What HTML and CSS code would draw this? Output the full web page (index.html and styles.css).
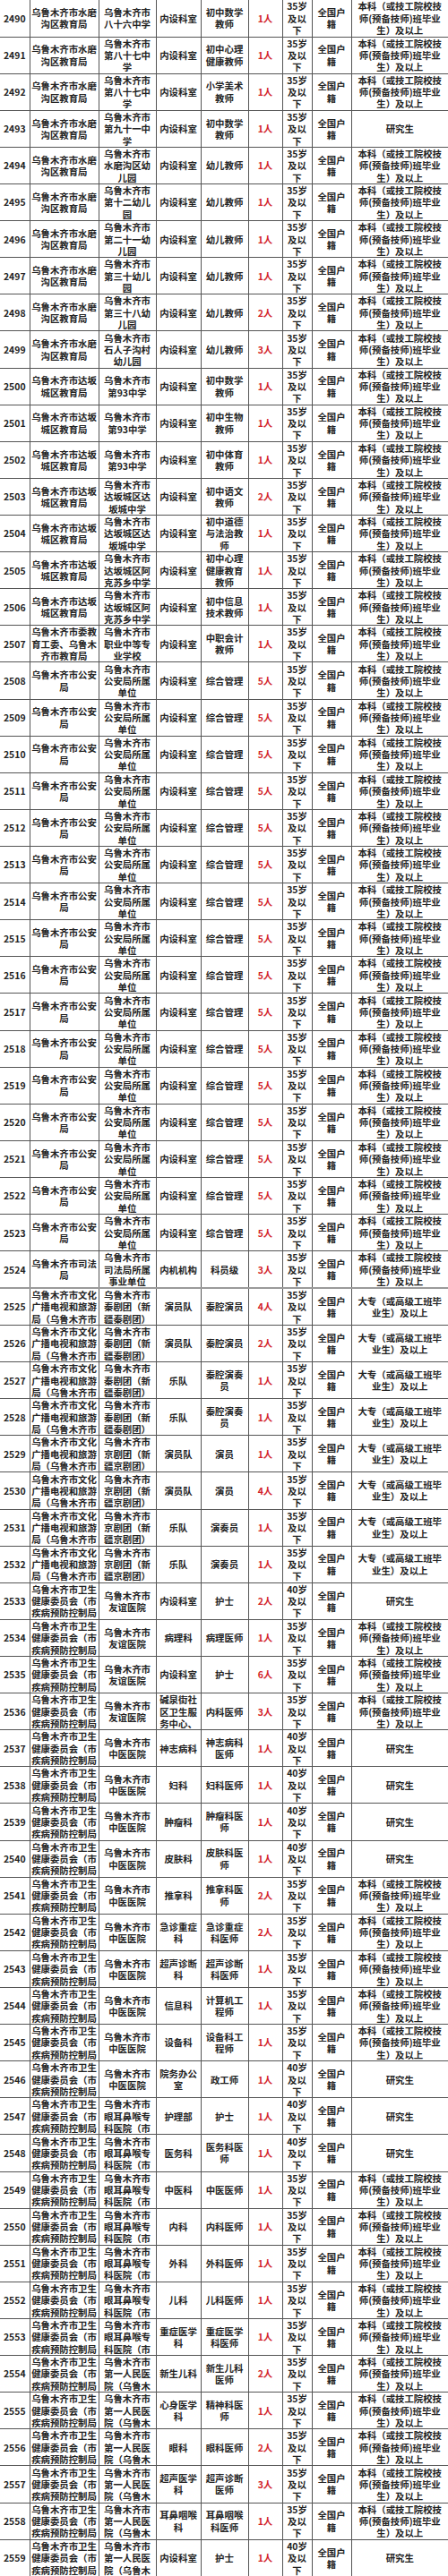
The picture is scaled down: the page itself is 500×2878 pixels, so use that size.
FILE: index.html
```html
<!DOCTYPE html>
<html lang="zh-CN">
<head>
<meta charset="utf-8">
<title>招聘岗位表</title>
<link rel="stylesheet" href="styles.css">
</head>
<body>
<table class="tbl">
<colgroup><col class="c1"><col class="c2"><col class="c3"><col class="c4"><col class="c5"><col class="c6"><col class="c7"><col class="c8"><col class="c9"></colgroup>
<tbody>
<tr><td>2490</td><td>乌鲁木齐市水磨<br>沟区教育局</td><td>乌鲁木齐市<br>八十六中学</td><td>内设科室</td><td>初中数学<br>教师</td><td class="n">1人</td><td>35岁<br>及以<br>下</td><td>全国户<br>籍</td><td>本科（或技工院校技<br>师(预备技师)班毕业<br>生）及以上</td></tr>
<tr><td>2491</td><td>乌鲁木齐市水磨<br>沟区教育局</td><td>乌鲁木齐市<br>第八十七中<br>学</td><td>内设科室</td><td>初中心理<br>健康教师</td><td class="n">1人</td><td>35岁<br>及以<br>下</td><td>全国户<br>籍</td><td>本科（或技工院校技<br>师(预备技师)班毕业<br>生）及以上</td></tr>
<tr><td>2492</td><td>乌鲁木齐市水磨<br>沟区教育局</td><td>乌鲁木齐市<br>第八十七中<br>学</td><td>内设科室</td><td>小学美术<br>教师</td><td class="n">1人</td><td>35岁<br>及以<br>下</td><td>全国户<br>籍</td><td>本科（或技工院校技<br>师(预备技师)班毕业<br>生）及以上</td></tr>
<tr><td>2493</td><td>乌鲁木齐市水磨<br>沟区教育局</td><td>乌鲁木齐市<br>第九十一中<br>学</td><td>内设科室</td><td>初中数学<br>教师</td><td class="n">1人</td><td>35岁<br>及以<br>下</td><td>全国户<br>籍</td><td>研究生</td></tr>
<tr><td>2494</td><td>乌鲁木齐市水磨<br>沟区教育局</td><td>乌鲁木齐市<br>水磨沟区幼<br>儿园</td><td>内设科室</td><td>幼儿教师</td><td class="n">1人</td><td>35岁<br>及以<br>下</td><td>全国户<br>籍</td><td>本科（或技工院校技<br>师(预备技师)班毕业<br>生）及以上</td></tr>
<tr><td>2495</td><td>乌鲁木齐市水磨<br>沟区教育局</td><td>乌鲁木齐市<br>第十二幼儿<br>园</td><td>内设科室</td><td>幼儿教师</td><td class="n">1人</td><td>35岁<br>及以<br>下</td><td>全国户<br>籍</td><td>本科（或技工院校技<br>师(预备技师)班毕业<br>生）及以上</td></tr>
<tr><td>2496</td><td>乌鲁木齐市水磨<br>沟区教育局</td><td>乌鲁木齐市<br>第二十一幼<br>儿园</td><td>内设科室</td><td>幼儿教师</td><td class="n">1人</td><td>35岁<br>及以<br>下</td><td>全国户<br>籍</td><td>本科（或技工院校技<br>师(预备技师)班毕业<br>生）及以上</td></tr>
<tr><td>2497</td><td>乌鲁木齐市水磨<br>沟区教育局</td><td>乌鲁木齐市<br>第三十幼儿<br>园</td><td>内设科室</td><td>幼儿教师</td><td class="n">1人</td><td>35岁<br>及以<br>下</td><td>全国户<br>籍</td><td>本科（或技工院校技<br>师(预备技师)班毕业<br>生）及以上</td></tr>
<tr><td>2498</td><td>乌鲁木齐市水磨<br>沟区教育局</td><td>乌鲁木齐市<br>第三十八幼<br>儿园</td><td>内设科室</td><td>幼儿教师</td><td class="n">2人</td><td>35岁<br>及以<br>下</td><td>全国户<br>籍</td><td>本科（或技工院校技<br>师(预备技师)班毕业<br>生）及以上</td></tr>
<tr><td>2499</td><td>乌鲁木齐市水磨<br>沟区教育局</td><td>乌鲁木齐市<br>石人子沟村<br>幼儿园</td><td>内设科室</td><td>幼儿教师</td><td class="n">3人</td><td>35岁<br>及以<br>下</td><td>全国户<br>籍</td><td>本科（或技工院校技<br>师(预备技师)班毕业<br>生）及以上</td></tr>
<tr><td>2500</td><td>乌鲁木齐市达坂<br>城区教育局</td><td>乌鲁木齐市<br>第93中学</td><td>内设科室</td><td>初中数学<br>教师</td><td class="n">1人</td><td>35岁<br>及以<br>下</td><td>全国户<br>籍</td><td>本科（或技工院校技<br>师(预备技师)班毕业<br>生）及以上</td></tr>
<tr><td>2501</td><td>乌鲁木齐市达坂<br>城区教育局</td><td>乌鲁木齐市<br>第93中学</td><td>内设科室</td><td>初中生物<br>教师</td><td class="n">1人</td><td>35岁<br>及以<br>下</td><td>全国户<br>籍</td><td>本科（或技工院校技<br>师(预备技师)班毕业<br>生）及以上</td></tr>
<tr><td>2502</td><td>乌鲁木齐市达坂<br>城区教育局</td><td>乌鲁木齐市<br>第93中学</td><td>内设科室</td><td>初中体育<br>教师</td><td class="n">1人</td><td>35岁<br>及以<br>下</td><td>全国户<br>籍</td><td>本科（或技工院校技<br>师(预备技师)班毕业<br>生）及以上</td></tr>
<tr><td>2503</td><td>乌鲁木齐市达坂<br>城区教育局</td><td>乌鲁木齐市<br>达坂城区达<br>坂城中学</td><td>内设科室</td><td>初中语文<br>教师</td><td class="n">2人</td><td>35岁<br>及以<br>下</td><td>全国户<br>籍</td><td>本科（或技工院校技<br>师(预备技师)班毕业<br>生）及以上</td></tr>
<tr><td>2504</td><td>乌鲁木齐市达坂<br>城区教育局</td><td>乌鲁木齐市<br>达坂城区达<br>坂城中学</td><td>内设科室</td><td>初中道德<br>与法治教<br>师</td><td class="n">1人</td><td>35岁<br>及以<br>下</td><td>全国户<br>籍</td><td>本科（或技工院校技<br>师(预备技师)班毕业<br>生）及以上</td></tr>
<tr><td>2505</td><td>乌鲁木齐市达坂<br>城区教育局</td><td>乌鲁木齐市<br>达坂城区阿<br>克苏乡中学</td><td>内设科室</td><td>初中心理<br>健康教育<br>教师</td><td class="n">1人</td><td>35岁<br>及以<br>下</td><td>全国户<br>籍</td><td>本科（或技工院校技<br>师(预备技师)班毕业<br>生）及以上</td></tr>
<tr><td>2506</td><td>乌鲁木齐市达坂<br>城区教育局</td><td>乌鲁木齐市<br>达坂城区阿<br>克苏乡中学</td><td>内设科室</td><td>初中信息<br>技术教师</td><td class="n">1人</td><td>35岁<br>及以<br>下</td><td>全国户<br>籍</td><td>本科（或技工院校技<br>师(预备技师)班毕业<br>生）及以上</td></tr>
<tr><td>2507</td><td>乌鲁木齐市委教<br>育工委、乌鲁木<br>齐市教育局</td><td>乌鲁木齐市<br>职业中等专<br>业学校</td><td>内设科室</td><td>中职会计<br>教师</td><td class="n">1人</td><td>35岁<br>及以<br>下</td><td>全国户<br>籍</td><td>本科（或技工院校技<br>师(预备技师)班毕业<br>生）及以上</td></tr>
<tr><td>2508</td><td>乌鲁木齐市公安<br>局</td><td>乌鲁木齐市<br>公安局所属<br>单位</td><td>内设科室</td><td>综合管理</td><td class="n">5人</td><td>35岁<br>及以<br>下</td><td>全国户<br>籍</td><td>本科（或技工院校技<br>师(预备技师)班毕业<br>生）及以上</td></tr>
<tr><td>2509</td><td>乌鲁木齐市公安<br>局</td><td>乌鲁木齐市<br>公安局所属<br>单位</td><td>内设科室</td><td>综合管理</td><td class="n">5人</td><td>35岁<br>及以<br>下</td><td>全国户<br>籍</td><td>本科（或技工院校技<br>师(预备技师)班毕业<br>生）及以上</td></tr>
<tr><td>2510</td><td>乌鲁木齐市公安<br>局</td><td>乌鲁木齐市<br>公安局所属<br>单位</td><td>内设科室</td><td>综合管理</td><td class="n">5人</td><td>35岁<br>及以<br>下</td><td>全国户<br>籍</td><td>本科（或技工院校技<br>师(预备技师)班毕业<br>生）及以上</td></tr>
<tr><td>2511</td><td>乌鲁木齐市公安<br>局</td><td>乌鲁木齐市<br>公安局所属<br>单位</td><td>内设科室</td><td>综合管理</td><td class="n">5人</td><td>35岁<br>及以<br>下</td><td>全国户<br>籍</td><td>本科（或技工院校技<br>师(预备技师)班毕业<br>生）及以上</td></tr>
<tr><td>2512</td><td>乌鲁木齐市公安<br>局</td><td>乌鲁木齐市<br>公安局所属<br>单位</td><td>内设科室</td><td>综合管理</td><td class="n">5人</td><td>35岁<br>及以<br>下</td><td>全国户<br>籍</td><td>本科（或技工院校技<br>师(预备技师)班毕业<br>生）及以上</td></tr>
<tr><td>2513</td><td>乌鲁木齐市公安<br>局</td><td>乌鲁木齐市<br>公安局所属<br>单位</td><td>内设科室</td><td>综合管理</td><td class="n">5人</td><td>35岁<br>及以<br>下</td><td>全国户<br>籍</td><td>本科（或技工院校技<br>师(预备技师)班毕业<br>生）及以上</td></tr>
<tr><td>2514</td><td>乌鲁木齐市公安<br>局</td><td>乌鲁木齐市<br>公安局所属<br>单位</td><td>内设科室</td><td>综合管理</td><td class="n">5人</td><td>35岁<br>及以<br>下</td><td>全国户<br>籍</td><td>本科（或技工院校技<br>师(预备技师)班毕业<br>生）及以上</td></tr>
<tr><td>2515</td><td>乌鲁木齐市公安<br>局</td><td>乌鲁木齐市<br>公安局所属<br>单位</td><td>内设科室</td><td>综合管理</td><td class="n">5人</td><td>35岁<br>及以<br>下</td><td>全国户<br>籍</td><td>本科（或技工院校技<br>师(预备技师)班毕业<br>生）及以上</td></tr>
<tr><td>2516</td><td>乌鲁木齐市公安<br>局</td><td>乌鲁木齐市<br>公安局所属<br>单位</td><td>内设科室</td><td>综合管理</td><td class="n">5人</td><td>35岁<br>及以<br>下</td><td>全国户<br>籍</td><td>本科（或技工院校技<br>师(预备技师)班毕业<br>生）及以上</td></tr>
<tr><td>2517</td><td>乌鲁木齐市公安<br>局</td><td>乌鲁木齐市<br>公安局所属<br>单位</td><td>内设科室</td><td>综合管理</td><td class="n">5人</td><td>35岁<br>及以<br>下</td><td>全国户<br>籍</td><td>本科（或技工院校技<br>师(预备技师)班毕业<br>生）及以上</td></tr>
<tr><td>2518</td><td>乌鲁木齐市公安<br>局</td><td>乌鲁木齐市<br>公安局所属<br>单位</td><td>内设科室</td><td>综合管理</td><td class="n">5人</td><td>35岁<br>及以<br>下</td><td>全国户<br>籍</td><td>本科（或技工院校技<br>师(预备技师)班毕业<br>生）及以上</td></tr>
<tr><td>2519</td><td>乌鲁木齐市公安<br>局</td><td>乌鲁木齐市<br>公安局所属<br>单位</td><td>内设科室</td><td>综合管理</td><td class="n">5人</td><td>35岁<br>及以<br>下</td><td>全国户<br>籍</td><td>本科（或技工院校技<br>师(预备技师)班毕业<br>生）及以上</td></tr>
<tr><td>2520</td><td>乌鲁木齐市公安<br>局</td><td>乌鲁木齐市<br>公安局所属<br>单位</td><td>内设科室</td><td>综合管理</td><td class="n">5人</td><td>35岁<br>及以<br>下</td><td>全国户<br>籍</td><td>本科（或技工院校技<br>师(预备技师)班毕业<br>生）及以上</td></tr>
<tr><td>2521</td><td>乌鲁木齐市公安<br>局</td><td>乌鲁木齐市<br>公安局所属<br>单位</td><td>内设科室</td><td>综合管理</td><td class="n">5人</td><td>35岁<br>及以<br>下</td><td>全国户<br>籍</td><td>本科（或技工院校技<br>师(预备技师)班毕业<br>生）及以上</td></tr>
<tr><td>2522</td><td>乌鲁木齐市公安<br>局</td><td>乌鲁木齐市<br>公安局所属<br>单位</td><td>内设科室</td><td>综合管理</td><td class="n">5人</td><td>35岁<br>及以<br>下</td><td>全国户<br>籍</td><td>本科（或技工院校技<br>师(预备技师)班毕业<br>生）及以上</td></tr>
<tr><td>2523</td><td>乌鲁木齐市公安<br>局</td><td>乌鲁木齐市<br>公安局所属<br>单位</td><td>内设科室</td><td>综合管理</td><td class="n">5人</td><td>35岁<br>及以<br>下</td><td>全国户<br>籍</td><td>本科（或技工院校技<br>师(预备技师)班毕业<br>生）及以上</td></tr>
<tr class="sep"><td>2524</td><td>乌鲁木齐市司法<br>局</td><td>乌鲁木齐市<br>司法局所属<br>事业单位</td><td>内机机构</td><td>科员级</td><td class="n">3人</td><td>35岁<br>及以<br>下</td><td>全国户<br>籍</td><td>本科（或技工院校技<br>师(预备技师)班毕业<br>生）及以上</td></tr>
<tr><td>2525</td><td>乌鲁木齐市文化<br>广播电视和旅游<br>局（乌鲁木齐市</td><td>乌鲁木齐市<br>秦剧团（新<br>疆秦剧团）</td><td>演员队</td><td>秦腔演员</td><td class="n">4人</td><td>35岁<br>及以<br>下</td><td>全国户<br>籍</td><td>大专（或高级工班毕<br>业生）及以上</td></tr>
<tr><td>2526</td><td>乌鲁木齐市文化<br>广播电视和旅游<br>局（乌鲁木齐市</td><td>乌鲁木齐市<br>秦剧团（新<br>疆秦剧团）</td><td>演员队</td><td>秦腔演员</td><td class="n">2人</td><td>35岁<br>及以<br>下</td><td>全国户<br>籍</td><td>大专（或高级工班毕<br>业生）及以上</td></tr>
<tr><td>2527</td><td>乌鲁木齐市文化<br>广播电视和旅游<br>局（乌鲁木齐市</td><td>乌鲁木齐市<br>秦剧团（新<br>疆秦剧团）</td><td>乐队</td><td>秦腔演奏<br>员</td><td class="n">1人</td><td>35岁<br>及以<br>下</td><td>全国户<br>籍</td><td>大专（或高级工班毕<br>业生）及以上</td></tr>
<tr><td>2528</td><td>乌鲁木齐市文化<br>广播电视和旅游<br>局（乌鲁木齐市</td><td>乌鲁木齐市<br>秦剧团（新<br>疆秦剧团）</td><td>乐队</td><td>秦腔演奏<br>员</td><td class="n">1人</td><td>35岁<br>及以<br>下</td><td>全国户<br>籍</td><td>大专（或高级工班毕<br>业生）及以上</td></tr>
<tr><td>2529</td><td>乌鲁木齐市文化<br>广播电视和旅游<br>局（乌鲁木齐市</td><td>乌鲁木齐市<br>京剧团（新<br>疆京剧团）</td><td>演员队</td><td>演员</td><td class="n">1人</td><td>35岁<br>及以<br>下</td><td>全国户<br>籍</td><td>大专（或高级工班毕<br>业生）及以上</td></tr>
<tr><td>2530</td><td>乌鲁木齐市文化<br>广播电视和旅游<br>局（乌鲁木齐市</td><td>乌鲁木齐市<br>京剧团（新<br>疆京剧团）</td><td>演员队</td><td>演员</td><td class="n">4人</td><td>35岁<br>及以<br>下</td><td>全国户<br>籍</td><td>大专（或高级工班毕<br>业生）及以上</td></tr>
<tr><td>2531</td><td>乌鲁木齐市文化<br>广播电视和旅游<br>局（乌鲁木齐市</td><td>乌鲁木齐市<br>京剧团（新<br>疆京剧团）</td><td>乐队</td><td>演奏员</td><td class="n">1人</td><td>35岁<br>及以<br>下</td><td>全国户<br>籍</td><td>大专（或高级工班毕<br>业生）及以上</td></tr>
<tr><td>2532</td><td>乌鲁木齐市文化<br>广播电视和旅游<br>局（乌鲁木齐市</td><td>乌鲁木齐市<br>京剧团（新<br>疆京剧团）</td><td>乐队</td><td>演奏员</td><td class="n">1人</td><td>35岁<br>及以<br>下</td><td>全国户<br>籍</td><td>大专（或高级工班毕<br>业生）及以上</td></tr>
<tr><td>2533</td><td>乌鲁木齐市卫生<br>健康委员会（市<br>疾病预防控制局</td><td>乌鲁木齐市<br>友谊医院</td><td>内设科室</td><td>护士</td><td class="n">2人</td><td>40岁<br>及以<br>下</td><td>全国户<br>籍</td><td>研究生</td></tr>
<tr><td>2534</td><td>乌鲁木齐市卫生<br>健康委员会（市<br>疾病预防控制局</td><td>乌鲁木齐市<br>友谊医院</td><td>病理科</td><td>病理医师</td><td class="n">1人</td><td>35岁<br>及以<br>下</td><td>全国户<br>籍</td><td>本科（或技工院校技<br>师(预备技师)班毕业<br>生）及以上</td></tr>
<tr><td>2535</td><td>乌鲁木齐市卫生<br>健康委员会（市<br>疾病预防控制局</td><td>乌鲁木齐市<br>友谊医院</td><td>内设科室</td><td>护士</td><td class="n">6人</td><td>35岁<br>及以<br>下</td><td>全国户<br>籍</td><td>本科（或技工院校技<br>师(预备技师)班毕业<br>生）及以上</td></tr>
<tr><td>2536</td><td>乌鲁木齐市卫生<br>健康委员会（市<br>疾病预防控制局</td><td>乌鲁木齐市<br>友谊医院</td><td>碱泉街社<br>区卫生服<br>务中心、</td><td>内科医师</td><td class="n">3人</td><td>35岁<br>及以<br>下</td><td>全国户<br>籍</td><td>本科（或技工院校技<br>师(预备技师)班毕业<br>生）及以上</td></tr>
<tr><td>2537</td><td>乌鲁木齐市卫生<br>健康委员会（市<br>疾病预防控制局</td><td>乌鲁木齐市<br>中医医院</td><td>神志病科</td><td>神志病科<br>医师</td><td class="n">1人</td><td>40岁<br>及以<br>下</td><td>全国户<br>籍</td><td>研究生</td></tr>
<tr><td>2538</td><td>乌鲁木齐市卫生<br>健康委员会（市<br>疾病预防控制局</td><td>乌鲁木齐市<br>中医医院</td><td>妇科</td><td>妇科医师</td><td class="n">1人</td><td>40岁<br>及以<br>下</td><td>全国户<br>籍</td><td>研究生</td></tr>
<tr><td>2539</td><td>乌鲁木齐市卫生<br>健康委员会（市<br>疾病预防控制局</td><td>乌鲁木齐市<br>中医医院</td><td>肿瘤科</td><td>肿瘤科医<br>师</td><td class="n">1人</td><td>40岁<br>及以<br>下</td><td>全国户<br>籍</td><td>研究生</td></tr>
<tr><td>2540</td><td>乌鲁木齐市卫生<br>健康委员会（市<br>疾病预防控制局</td><td>乌鲁木齐市<br>中医医院</td><td>皮肤科</td><td>皮肤科医<br>师</td><td class="n">1人</td><td>40岁<br>及以<br>下</td><td>全国户<br>籍</td><td>研究生</td></tr>
<tr><td>2541</td><td>乌鲁木齐市卫生<br>健康委员会（市<br>疾病预防控制局</td><td>乌鲁木齐市<br>中医医院</td><td>推拿科</td><td>推拿科医<br>师</td><td class="n">2人</td><td>35岁<br>及以<br>下</td><td>全国户<br>籍</td><td>本科（或技工院校技<br>师(预备技师)班毕业<br>生）及以上</td></tr>
<tr><td>2542</td><td>乌鲁木齐市卫生<br>健康委员会（市<br>疾病预防控制局</td><td>乌鲁木齐市<br>中医医院</td><td>急诊重症<br>科</td><td>急诊重症<br>科医师</td><td class="n">2人</td><td>35岁<br>及以<br>下</td><td>全国户<br>籍</td><td>本科（或技工院校技<br>师(预备技师)班毕业<br>生）及以上</td></tr>
<tr><td>2543</td><td>乌鲁木齐市卫生<br>健康委员会（市<br>疾病预防控制局</td><td>乌鲁木齐市<br>中医医院</td><td>超声诊断<br>科</td><td>超声诊断<br>科医师</td><td class="n">1人</td><td>35岁<br>及以<br>下</td><td>全国户<br>籍</td><td>本科（或技工院校技<br>师(预备技师)班毕业<br>生）及以上</td></tr>
<tr><td>2544</td><td>乌鲁木齐市卫生<br>健康委员会（市<br>疾病预防控制局</td><td>乌鲁木齐市<br>中医医院</td><td>信息科</td><td>计算机工<br>程师</td><td class="n">1人</td><td>35岁<br>及以<br>下</td><td>全国户<br>籍</td><td>本科（或技工院校技<br>师(预备技师)班毕业<br>生）及以上</td></tr>
<tr><td>2545</td><td>乌鲁木齐市卫生<br>健康委员会（市<br>疾病预防控制局</td><td>乌鲁木齐市<br>中医医院</td><td>设备科</td><td>设备科工<br>程师</td><td class="n">1人</td><td>35岁<br>及以<br>下</td><td>全国户<br>籍</td><td>本科（或技工院校技<br>师(预备技师)班毕业<br>生）及以上</td></tr>
<tr><td>2546</td><td>乌鲁木齐市卫生<br>健康委员会（市<br>疾病预防控制局</td><td>乌鲁木齐市<br>中医医院</td><td>院务办公<br>室</td><td>政工师</td><td class="n">1人</td><td>40岁<br>及以<br>下</td><td>全国户<br>籍</td><td>研究生</td></tr>
<tr><td>2547</td><td>乌鲁木齐市卫生<br>健康委员会（市<br>疾病预防控制局</td><td>乌鲁木齐市<br>眼耳鼻喉专<br>科医院（市</td><td>护理部</td><td>护士</td><td class="n">1人</td><td>40岁<br>及以<br>下</td><td>全国户<br>籍</td><td>研究生</td></tr>
<tr><td>2548</td><td>乌鲁木齐市卫生<br>健康委员会（市<br>疾病预防控制局</td><td>乌鲁木齐市<br>眼耳鼻喉专<br>科医院（市</td><td>医务科</td><td>医务科医<br>师</td><td class="n">1人</td><td>40岁<br>及以<br>下</td><td>全国户<br>籍</td><td>研究生</td></tr>
<tr><td>2549</td><td>乌鲁木齐市卫生<br>健康委员会（市<br>疾病预防控制局</td><td>乌鲁木齐市<br>眼耳鼻喉专<br>科医院（市</td><td>中医科</td><td>中医医师</td><td class="n">1人</td><td>35岁<br>及以<br>下</td><td>全国户<br>籍</td><td>本科（或技工院校技<br>师(预备技师)班毕业<br>生）及以上</td></tr>
<tr><td>2550</td><td>乌鲁木齐市卫生<br>健康委员会（市<br>疾病预防控制局</td><td>乌鲁木齐市<br>眼耳鼻喉专<br>科医院（市</td><td>内科</td><td>内科医师</td><td class="n">1人</td><td>35岁<br>及以<br>下</td><td>全国户<br>籍</td><td>本科（或技工院校技<br>师(预备技师)班毕业<br>生）及以上</td></tr>
<tr><td>2551</td><td>乌鲁木齐市卫生<br>健康委员会（市<br>疾病预防控制局</td><td>乌鲁木齐市<br>眼耳鼻喉专<br>科医院（市</td><td>外科</td><td>外科医师</td><td class="n">1人</td><td>35岁<br>及以<br>下</td><td>全国户<br>籍</td><td>本科（或技工院校技<br>师(预备技师)班毕业<br>生）及以上</td></tr>
<tr><td>2552</td><td>乌鲁木齐市卫生<br>健康委员会（市<br>疾病预防控制局</td><td>乌鲁木齐市<br>眼耳鼻喉专<br>科医院（市</td><td>儿科</td><td>儿科医师</td><td class="n">1人</td><td>35岁<br>及以<br>下</td><td>全国户<br>籍</td><td>本科（或技工院校技<br>师(预备技师)班毕业<br>生）及以上</td></tr>
<tr><td>2553</td><td>乌鲁木齐市卫生<br>健康委员会（市<br>疾病预防控制局</td><td>乌鲁木齐市<br>眼耳鼻喉专<br>科医院（市</td><td>重症医学<br>科</td><td>重症医学<br>科医师</td><td class="n">1人</td><td>35岁<br>及以<br>下</td><td>全国户<br>籍</td><td>本科（或技工院校技<br>师(预备技师)班毕业<br>生）及以上</td></tr>
<tr><td>2554</td><td>乌鲁木齐市卫生<br>健康委员会（市<br>疾病预防控制局</td><td>乌鲁木齐市<br>第一人民医<br>院（乌鲁木</td><td>新生儿科</td><td>新生儿科<br>医师</td><td class="n">2人</td><td>35岁<br>及以<br>下</td><td>全国户<br>籍</td><td>本科（或技工院校技<br>师(预备技师)班毕业<br>生）及以上</td></tr>
<tr><td>2555</td><td>乌鲁木齐市卫生<br>健康委员会（市<br>疾病预防控制局</td><td>乌鲁木齐市<br>第一人民医<br>院（乌鲁木</td><td>心身医学<br>科</td><td>精神科医<br>师</td><td class="n">1人</td><td>35岁<br>及以<br>下</td><td>全国户<br>籍</td><td>本科（或技工院校技<br>师(预备技师)班毕业<br>生）及以上</td></tr>
<tr><td>2556</td><td>乌鲁木齐市卫生<br>健康委员会（市<br>疾病预防控制局</td><td>乌鲁木齐市<br>第一人民医<br>院（乌鲁木</td><td>眼科</td><td>眼科医师</td><td class="n">2人</td><td>35岁<br>及以<br>下</td><td>全国户<br>籍</td><td>本科（或技工院校技<br>师(预备技师)班毕业<br>生）及以上</td></tr>
<tr><td>2557</td><td>乌鲁木齐市卫生<br>健康委员会（市<br>疾病预防控制局</td><td>乌鲁木齐市<br>第一人民医<br>院（乌鲁木</td><td>超声医学<br>科</td><td>超声诊断<br>医师</td><td class="n">3人</td><td>35岁<br>及以<br>下</td><td>全国户<br>籍</td><td>本科（或技工院校技<br>师(预备技师)班毕业<br>生）及以上</td></tr>
<tr><td>2558</td><td>乌鲁木齐市卫生<br>健康委员会（市<br>疾病预防控制局</td><td>乌鲁木齐市<br>第一人民医<br>院（乌鲁木</td><td>耳鼻咽喉<br>科</td><td>耳鼻咽喉<br>科医师</td><td class="n">1人</td><td>35岁<br>及以<br>下</td><td>全国户<br>籍</td><td>本科（或技工院校技<br>师(预备技师)班毕业<br>生）及以上</td></tr>
<tr><td>2559</td><td>乌鲁木齐市卫生<br>健康委员会（市<br>疾病预防控制局</td><td>乌鲁木齐市<br>第一人民医<br>院（乌鲁木</td><td>内设科室</td><td>护士</td><td class="n">1人</td><td>40岁<br>及以<br>下</td><td>全国户<br>籍</td><td>研究生</td></tr>
</tbody>
</table>
</body>
</html>
```

FILE: styles.css
```css
html, body {
  margin: 0;
  padding: 0;
  background: #ffffff;
}

body {
  font-family: "Noto Sans CJK SC", "Noto Sans", sans-serif;
  font-size: 10.4px;
  line-height: 13.3px;
  font-weight: 700;
  color: #222222;
}

.tbl {
  width: 500px;
  border-collapse: collapse;
  border-style: hidden;
  table-layout: fixed;
}

.tbl .c1 { width: 33px; }
.tbl .c2 { width: 77px; }
.tbl .c3 { width: 64px; }
.tbl .c4 { width: 50px; }
.tbl .c5 { width: 53px; }
.tbl .c6 { width: 38px; }
.tbl .c7 { width: 33px; }
.tbl .c8 { width: 44px; }
.tbl .c9 { width: 108px; }

.tbl tr {
  height: 41.114px;
}

.tbl td {
  border: 1px solid #555555;
  padding: 0;
  text-align: center;
  vertical-align: middle;
  white-space: nowrap;
  overflow: hidden;
}

.tbl td.n {
  color: #d2232a;
}

.tbl tr.sep td {
  border-bottom: 2px solid #9a9a9a;
}
```
